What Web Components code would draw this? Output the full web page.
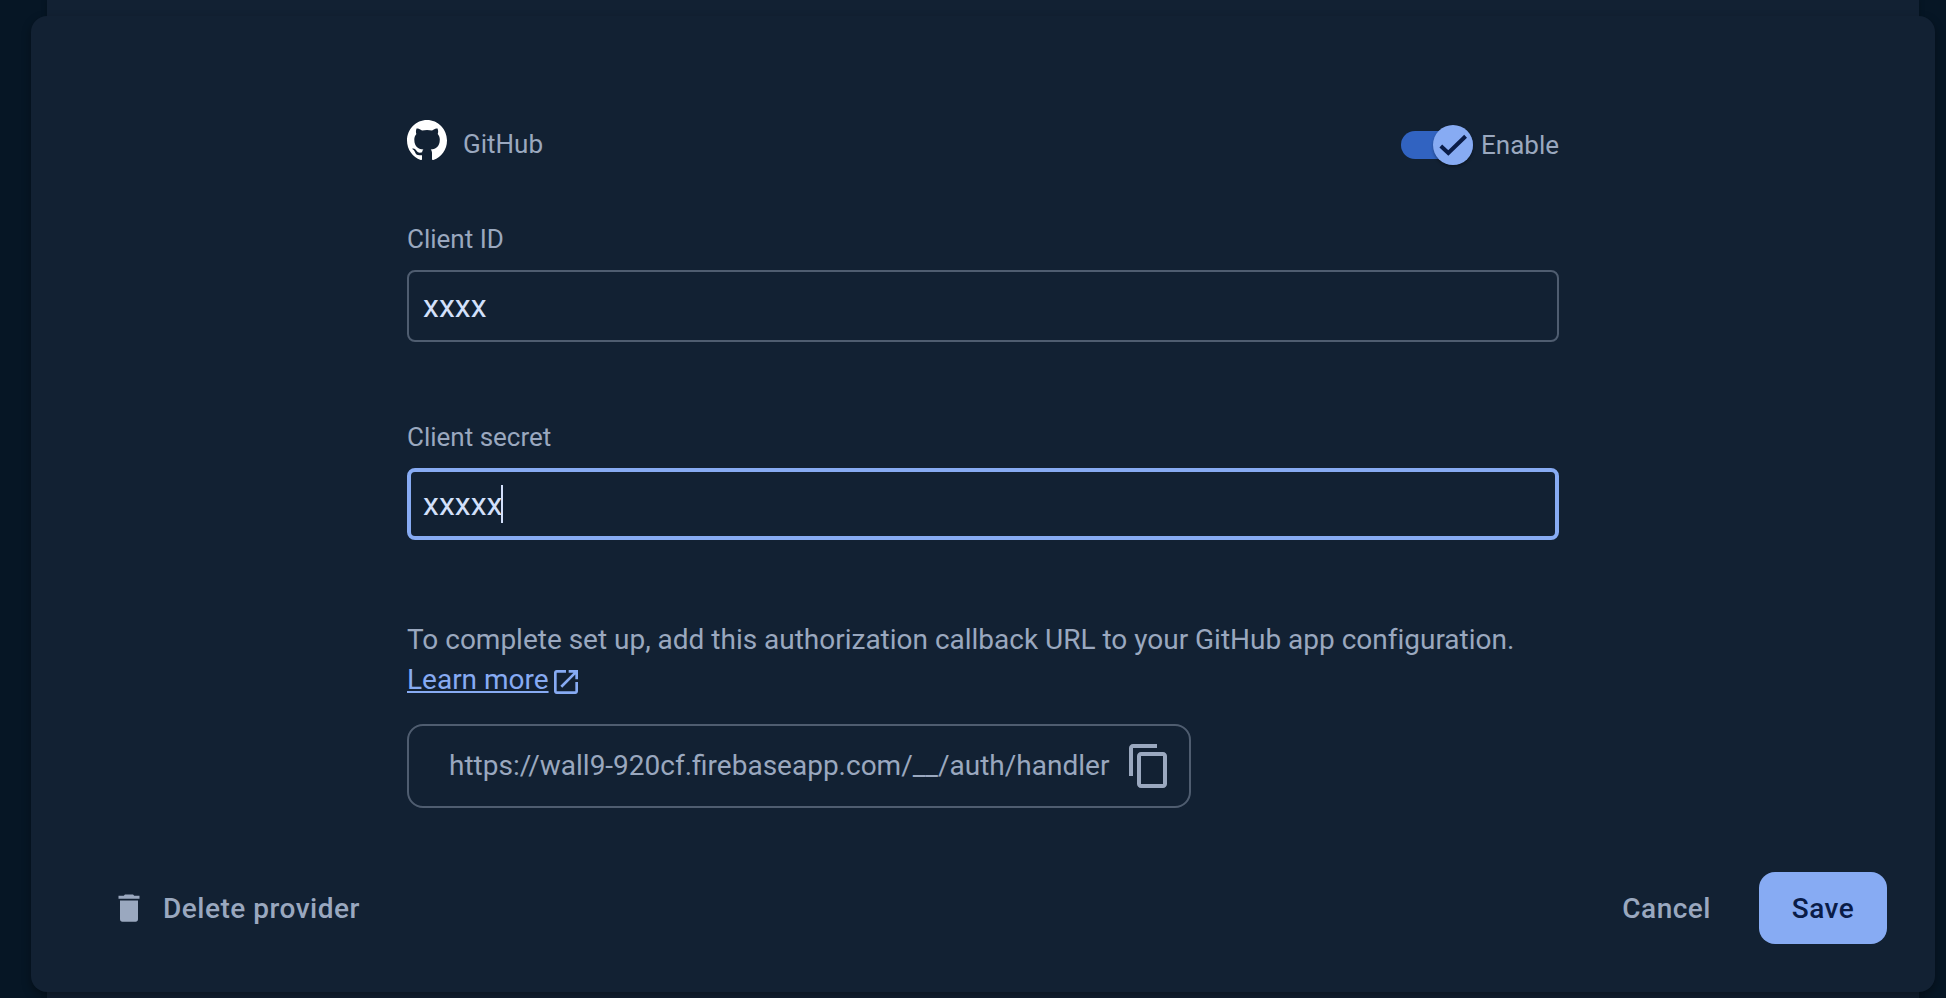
<!DOCTYPE html>
<html lang="en">
<head>
<meta charset="utf-8">
<title>GitHub sign-in provider</title>
<style>
  :root {
    --surface: #122133;
    --page: #061625;
    --outline: #4f5d70;
    --muted: #9aa8bf;
    --text: #d3e0fb;
    --accent: #87abf3;
    --on-accent: #0a1c48;
    --track: #3163c1;
  }
  html, body { margin: 0; height: 100%; overflow: hidden; background: var(--page); }
  body { font-family: Roboto, sans-serif; color: var(--muted); -webkit-font-smoothing: antialiased; }
</style>
</head>
<body>
<provider-page></provider-page>
<script>
function define(name, html) {
  const template = document.createElement('template');
  template.innerHTML = html;
  customElements.define(name, class extends HTMLElement {
    constructor() {
      super();
      this.attachShadow({ mode: 'open' }).append(template.content.cloneNode(true));
    }
  });
}

define('enable-switch', `
<style>
  :host { display: flex; align-items: center; gap: 8px; height: 40px; font-size: 26px; line-height: 40px; }
  .switch { display: flex; align-items: center; justify-content: flex-end; width: 72px; height: 28px; border-radius: 14px; background: var(--track); }
  .thumb { flex: none; width: 40px; height: 40px; border-radius: 50%; background: var(--accent); box-shadow: 0 2px 3px rgba(0,0,0,.3); }
  svg { display: block; }
</style>
<span class="switch"><span class="thumb"><svg width="40" height="40" viewBox="0 0 40 40" fill="none" stroke="var(--on-accent)" stroke-width="4"><path d="M7.8 21 15.300 28 32.600 11.200"/></svg></span></span>
<slot></slot>`);

define('text-field', `
<style>
  :host { display: block; }
  label { display: block; font-size: 26px; line-height: 36px; margin-bottom: 13px; }
  .box { display: flex; align-items: center; box-sizing: border-box; height: 72px; padding: 0 14px; border: 2px solid var(--outline); border-radius: 8px; font-size: 32px; line-height: 38px; color: var(--text); }
  :host([focused]) .box { border: 4px solid var(--accent); padding: 0 12px; }
  .caret { display: none; width: 2px; height: 38px; margin-left: -1px; background: var(--text); }
  :host([focused]) .caret { display: block; }
</style>
<label><slot name="label"></slot></label>
<div class="box"><slot></slot><span class="caret"></span></div>`);

define('copy-box', `
<style>
  :host { display: flex; align-items: center; justify-content: space-between; box-sizing: border-box; width: 784px; height: 84px; padding: 0 16px 0 40px; border: 2px solid var(--outline); border-radius: 16px; font-size: 28px; line-height: 40px; }
  svg { flex: none; }
</style>
<span><slot></slot></span>
<svg width="48" height="48" viewBox="0 0 24 24" fill="var(--muted)"><path d="M16 1H4c-1.1 0-2 .9-2 2v14h2V3h12V1zm3 4H8c-1.1 0-2 .9-2 2v14c0 1.1.9 2 2 2h11c1.1 0 2-.9 2-2V7c0-1.1-.9-2-2-2zm0 16H8V7h11v14z"/></svg>`);

define('text-button', `
<style>
  :host { display: flex; align-items: center; justify-content: center; gap: 16px; height: 72px; font-size: 28px; font-weight: 500; line-height: 40px; letter-spacing: .5px; white-space: nowrap; }
  :host([primary]) { width: 128px; border-radius: 16px; background: var(--accent); color: var(--on-accent); }
  span { padding-top: 2px; }
</style>
<slot name="icon"></slot><span><slot></slot></span>`);

define('action-bar', `
<style>
  :host { display: flex; align-items: center; }
  .gap { flex: 1; }
  .save { margin-left: 48px; }
</style>
<text-button><svg slot="icon" width="36" height="36" viewBox="0 0 24 24" fill="var(--muted)"><path d="M6 19.5c0 1 .6 1.6 1.6 1.6h8.8c1 0 1.6-.6 1.6-1.6V7H6v12.500zM19 3.900h-3.500L14.700 3H9.300l-.8.900H5v2h14v-2z"/></svg>Delete provider</text-button>
<span class="gap"></span>
<text-button>Cancel</text-button>
<text-button class="save" primary>Save</text-button>`);

define('provider-form', `
<style>
  :host { display: block; width: 1152px; }
  header { display: flex; justify-content: space-between; height: 45px; }
  .name { display: flex; gap: 16px; font-size: 26px; line-height: 48px; }
  enable-switch { margin-top: 5px; }
  .first { margin-top: 56px; }
  .second { margin-top: 77px; }
  p { margin: 80px 0 0; font-size: 28px; line-height: 40px; letter-spacing: -.01px; white-space: nowrap; }
  a { color: var(--accent); text-decoration: underline; text-decoration-thickness: 2px; text-underline-offset: 2px; }
  .learn { display: flex; align-items: center; }
  .learn svg { margin: 4px 0 0 1.5px; }
  copy-box { margin-top: 24px; }
</style>
<header>
  <div class="name">
    <svg width="40" height="40" viewBox="0 0 16 15.620" preserveAspectRatio="none" fill="#fff"><path d="M8 0C3.580 0 0 3.580 0 8c0 3.540 2.290 6.530 5.470 7.590.4.070.55-.17.55-.38 0-.19-.01-.82-.01-1.490-2.010.37-2.530-.49-2.690-.94-.09-.23-.48-.94-.82-1.130-.28-.15-.68-.52-.01-.53.63-.01 1.080.58 1.230.82.720 1.210 1.870.87 2.330.66.070-.52.280-.87.510-1.070-1.780-.2-3.640-.89-3.640-3.950 0-.87.310-1.590.820-2.150-.08-.2-.36-1.020.08-2.120 0 0 .67-.21 2.200.82.640-.18 1.320-.27 2-.27s1.360.09 2 .27c1.530-1.040 2.200-.82 2.200-.82.440 1.100.160 1.920.08 2.120.51.560.820 1.270.820 2.150 0 3.070-1.870 3.750-3.650 3.950.290.250.540.730.540 1.480 0 1.070-.01 1.930-.01 2.200 0 .210.150.460.550.380A8.013 8.013 0 0 0 16 8c0-4.420-3.580-8-8-8z"/></svg>
    <span>GitHub</span>
  </div>
  <enable-switch>Enable</enable-switch>
</header>
<text-field class="first"><span slot="label">Client ID</span>xxxx</text-field>
<text-field class="second" focused><span slot="label">Client secret</span>xxxxx</text-field>
<p>To complete set up, add this authorization callback URL to your GitHub app configuration.<span class="learn"><a>Learn more</a><svg width="32" height="32" viewBox="0 0 24 24" fill="var(--accent)"><path d="M19 19H5V5h7V3H5c-1.110 0-2 .9-2 2v14c0 1.100.890 2 2 2h14c1.100 0 2-.9 2-2v-7h-2v7zM14 3v2h3.590l-9.830 9.830 1.410 1.410L19 6.410V10h2V3h-7z"/></svg></span></p>
<copy-box>https://wall9-920cf.firebaseapp.com/__/auth/handler</copy-box>`);

define('provider-page', `
<style>
  :host { display: grid; width: 1946px; height: 998px; overflow: hidden; }
  .card, .panel { grid-area: 1 / 1; }
  .card { margin: 0 27px 0 47px; background: var(--surface); box-shadow: 0 0 6px rgba(0,0,0,.2); }
  .panel { display: flex; flex-direction: column; box-sizing: border-box; margin: 16px 11px 6px 31px; padding: 104px 48px 0 80px; border-radius: 16px; background: var(--surface); box-shadow: 0 4px 10px rgba(0,0,0,.35); }
  provider-form { margin-left: 296px; }
  action-bar { margin-top: 64px; }
</style>
<div class="card"></div>
<section class="panel">
  <provider-form></provider-form>
  <action-bar></action-bar>
</section>`);
</script>
</body>
</html>
